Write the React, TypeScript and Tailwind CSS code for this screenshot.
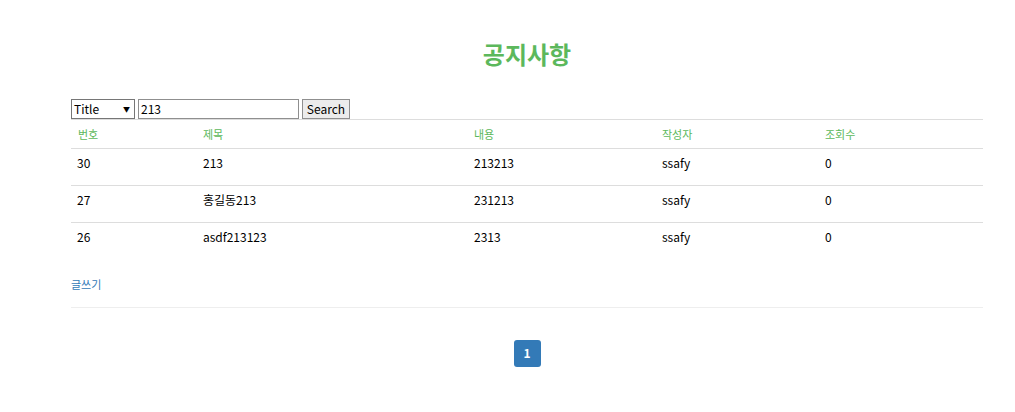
const rows = [
  { no: 30, title: "213", content: "213213", writer: "ssafy", hit: 0 },
  { no: 27, title: "홍길동213", content: "231213", writer: "ssafy", hit: 0 },
  { no: 26, title: "asdf213123", content: "2313", writer: "ssafy", hit: 0 },
]

const App = () => {
  return (
    <div
      className="min-h-[412px] w-full bg-white text-[12px] text-[#333]"
      style={{ fontFamily: '"Noto Sans CJK KR", "Noto Sans", sans-serif' }}
    >
      <div className="ml-[71px] w-[912px] pt-[38px]">
        <h2 className="text-center text-[24px] font-bold leading-[32px] text-[#5cb85c]">공지사항</h2>

        {/* search */}
        <div className="mt-[29px] flex h-[20px] items-center gap-[3px]">
          <div className="flex h-[20px] w-[64px] items-center justify-between border border-[#767676] bg-white pl-[2px] pr-[4px] text-[12px] text-black">
            <span>Title</span>
            <span className="text-[7px]">▼</span>
          </div>
          <div className="flex h-[20px] w-[161px] items-center border border-[#8f8f8f] px-[2px] text-[12px] text-black">213</div>
          <button className="h-[20px] w-[48px] border border-[#8f8f8f] bg-[#ececec] text-[12px] leading-none text-black">
            Search
          </button>
        </div>

        {/* table */}
        <table className="w-full table-fixed border-collapse">
          <colgroup>
            <col className="w-[125px]" />
            <col className="w-[271px]" />
            <col className="w-[188px]" />
            <col className="w-[163px]" />
            <col />
          </colgroup>
          <thead>
            <tr className="h-[29px] border-y border-[#dddddd] text-left text-[11px] text-[#5cb85c]">
              <th className="pl-[7px] font-normal">번호</th>
              <th className="pl-[7px] font-normal">제목</th>
              <th className="pl-[7px] font-normal">내용</th>
              <th className="pl-[7px] font-normal">작성자</th>
              <th className="pl-[7px] font-normal">조회수</th>
            </tr>
          </thead>
          <tbody>
            {rows.map((r, i) => (
              <tr key={r.no} className={`h-[37px] ${i < rows.length - 1 ? "border-b border-[#dddddd]" : ""} text-black`}>
                <td className="pl-[6px] pb-[9px]">{r.no}</td>
                <td className="pl-[7px] pb-[9px]">{r.title}</td>
                <td className="pl-[7px] pb-[9px]">{r.content}</td>
                <td className="pl-[7px] pb-[9px]">{r.writer}</td>
                <td className="pl-[7px] pb-[9px]">{r.hit}</td>
              </tr>
            ))}
          </tbody>
        </table>

        <div className="mt-[15px] border-b border-[#eeeeee] pb-[14px]">
          <a className="text-[11px] text-[#337ab7]">글쓰기</a>
        </div>

        <div className="mt-[32px] flex justify-center">
          <span className="flex h-[27px] w-[27px] items-center justify-center rounded-[3px] bg-[#337ab7] text-[12px] font-bold text-white">
            1
          </span>
        </div>
      </div>
    </div>
  )
}

export default App
